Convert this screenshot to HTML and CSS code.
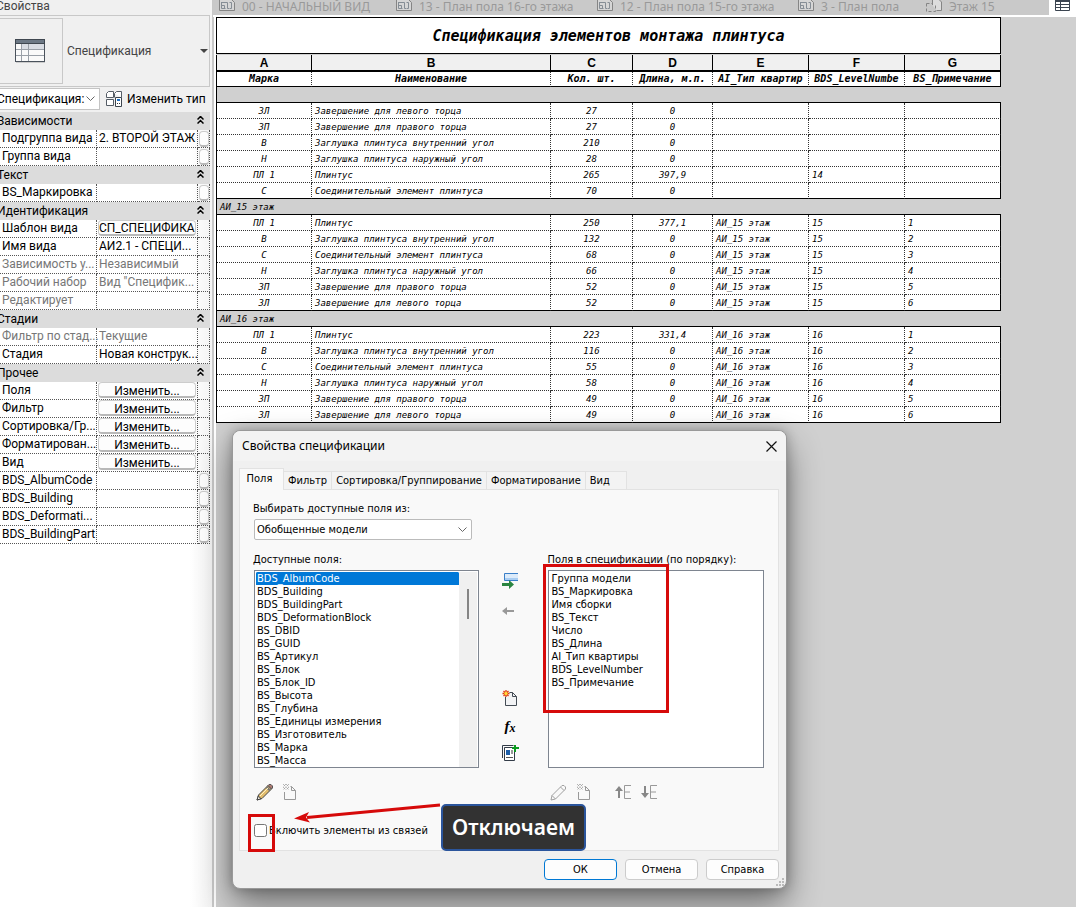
FILE: index.html
```html
<!DOCTYPE html>
<html lang="ru">
<head>
	<meta charset="utf-8">
	<title>Спецификация элементов монтажа плинтуса</title>
	<link rel="stylesheet" href="styles.css">
</head>
<body>
<svg class="defs" width="0" height="0">
	<symbol id="plan" viewBox="0 0 16 11">
		<path d="M.5-2V10.500h15V2.500l-3-3" fill="#d6d6d6" stroke="#858585"/>
		<path d="M3 2.500h5.500v6H10M2.500 5.500h3v3M2.500 2v6.500h4M10.500 2.500h2v6h-2" fill="none" stroke="#858d95"/>
	</symbol>
	<symbol id="up2" viewBox="0 0 7 8">
		<path d="M.5 3.500l3-3 3 3M.5 7.500l3-3 3 3" fill="none" stroke="#000" stroke-width="1.500"/>
	</symbol>
	<symbol id="chev" viewBox="0 0 9 6">
		<path d="M.5.5l4 4 4-4" fill="none" stroke="#666"/>
	</symbol>
	<symbol id="delpage" viewBox="0 0 16 17">
		<path d="M2.500 8v7.500h11V6.500l-4-4h-1M9.500 2.500v4h4" fill="none" stroke="#999"/>
		<path d="M1 0l6 6M4 0l3 3M1 3l3 3M7 0L1 6M4 0L1 3M7 3L4 6" stroke="#999" stroke-dasharray="1 1"/>
	</symbol>
</svg>

<div class="app">
	<aside class="props">
		<div class="props-title">Свойства</div>
		<div class="type-box">
			<div class="thumb">
				<svg width="32" height="26" viewBox="0 0 32 26">
					<rect x="2" y="3" width="29" height="22" fill="#ccc"/>
					<rect x="1.500" y="1.500" width="29" height="22" fill="#fafafa" stroke="#4a525c"/>
					<rect x="1.500" y="1.500" width="29" height="4" fill="#6c7885" stroke="#3f4750"/>
					<path d="M8 6h22v6H8z" fill="#d9dde4"/>
					<path d="M2 11.500h28M2 17.500h28M7.500 6v17M14.500 6v17" stroke="#9aa0a8"/>
				</svg>
			</div>
			<span class="type-name">Спецификация</span>
			<svg width="8" height="4" viewBox="0 0 8 4"><path d="M0 0h8L4 4z" fill="#444"/></svg>
		</div>
		<div class="type-row">
			<button class="combo" type="button"><span>Спецификация:</span><svg width="9" height="6"><use href="#chev"/></svg></button>
			<button class="edit-type" type="button">
				<svg width="16" height="16" viewBox="0 0 16 16">
					<path d="M.5 2.500l2-2h5v6h-7zM8.500 2.500l2-2h5v6M.5 8.500h7v6h-7zM8.500 2.500v4" fill="#fff" stroke="#555d66"/>
					<path d="M9.500 6.500h6v9h-6z" fill="#fff" stroke="#3b444d"/>
					<path d="M11 8h3v2h-3z" fill="#1f6fc0"/>
					<path d="M11 12h1v1h-1zM13 12h1v1h-1z" fill="#333"/>
				</svg>
				Изменить тип
			</button>
		</div>
		<table class="grid">
			<colgroup><col><col class="c-value"><col class="c-more"></colgroup>
			<tr class="head"><th colspan="2">Зависимости</th><th><svg width="7" height="8"><use href="#up2"/></svg></th></tr>
			<tr><td>Подгруппа вида</td><td>2. ВТОРОЙ ЭТАЖ</td><td><button class="more" aria-label="Подгруппа вида"></button></td></tr>
			<tr><td>Группа вида</td><td></td><td><button class="more" aria-label="Группа вида"></button></td></tr>
			<tr class="head"><th colspan="2">Текст</th><th><svg width="7" height="8"><use href="#up2"/></svg></th></tr>
			<tr><td>BS_Маркировка</td><td></td><td><button class="more" aria-label="BS_Маркировка"></button></td></tr>
			<tr class="head"><th colspan="2">Идентификация</th><th><svg width="7" height="8"><use href="#up2"/></svg></th></tr>
			<tr><td>Шаблон вида</td><td><button class="cell-btn tpl">СП_СПЕЦИФИКА</button></td><td></td></tr>
			<tr><td>Имя вида</td><td>АИ2.1 - СПЕЦИ...</td><td></td></tr>
			<tr class="off"><td>Зависимость у...</td><td>Независимый</td><td></td></tr>
			<tr class="off"><td>Рабочий набор</td><td>Вид "Специфик...</td><td></td></tr>
			<tr class="off"><td>Редактирует</td><td></td><td></td></tr>
			<tr class="head"><th colspan="2">Стадии</th><th><svg width="7" height="8"><use href="#up2"/></svg></th></tr>
			<tr class="off"><td>Фильтр по стад...</td><td>Текущие</td><td></td></tr>
			<tr><td>Стадия</td><td>Новая конструк...</td><td></td></tr>
			<tr class="head"><th colspan="2">Прочее</th><th><svg width="7" height="8"><use href="#up2"/></svg></th></tr>
			<tr><td>Поля</td><td><button class="cell-btn">Изменить...</button></td><td></td></tr>
			<tr><td>Фильтр</td><td><button class="cell-btn">Изменить...</button></td><td></td></tr>
			<tr><td>Сортировка/Гр...</td><td><button class="cell-btn">Изменить...</button></td><td></td></tr>
			<tr><td>Форматирован...</td><td><button class="cell-btn">Изменить...</button></td><td></td></tr>
			<tr><td>Вид</td><td><button class="cell-btn">Изменить...</button></td><td></td></tr>
			<tr><td>BDS_AlbumCode</td><td></td><td><button class="more" aria-label="BDS_AlbumCode"></button></td></tr>
			<tr><td>BDS_Building</td><td></td><td><button class="more" aria-label="BDS_Building"></button></td></tr>
			<tr><td>BDS_Deformati...</td><td></td><td><button class="more" aria-label="BDS_Deformation"></button></td></tr>
			<tr><td>BDS_BuildingPart</td><td></td><td><button class="more" aria-label="BDS_BuildingPart"></button></td></tr>
		</table>
	</aside>

	<main class="view">
		<nav class="docs">
			<a class="doc" href="#"><svg width="16" height="11"><use href="#plan"/></svg>00 - НАЧАЛЬНЫЙ ВИД</a>
			<a class="doc wide" href="#"><svg width="16" height="11"><use href="#plan"/></svg>13 - План пола 16-го этажа</a>
			<a class="doc wide" href="#"><svg width="16" height="11"><use href="#plan"/></svg>12 - План пола 15-го этажа</a>
			<a class="doc short" href="#"><svg width="16" height="11"><use href="#plan"/></svg>3 - План пола</a>
			<a class="doc last" href="#"><svg width="16" height="12" viewBox="0 0 16 12"><path d="M6.500 5V-1h6l3 3v8.500h-5" fill="#ddd" stroke="#858585"/><path d="M.5 3.500h6M.5 3.500v8h9v-6" fill="none" stroke="#858585" stroke-dasharray="3 2"/></svg>Этаж 15</a>
			<a class="doc active" href="#" aria-label="Спецификация"><svg width="15" height="12" viewBox="0 0 15 12"><path d="M.5 0v10.500h14V0M1 4.500h13M1 7.500h13M5.500 2v9M.5.5h14v1H.5z" fill="none" stroke="#3b4450"/></svg></a>
		</nav>
		<table class="sched">
			<caption>Спецификация элементов монтажа плинтуса</caption>
			<colgroup><col class="w-a"><col class="w-b"><col class="w-c"><col class="w-d"><col class="w-e"><col class="w-e"><col class="w-e"></colgroup>
			<tr class="letters"><th>A</th><th>B</th><th>C</th><th>D</th><th>E</th><th>F</th><th>G</th></tr>
			<tr class="names"><th>Марка</th><th>Наименование</th><th>Кол. шт.</th><th>Длина, м.п.</th><th>AI_Тип квартир</th><th>BDS_LevelNumbe</th><th>BS_Примечание</th></tr>
			<tr class="group"><td colspan="7"></td></tr>
			<tr><td>ЗЛ</td><td>Завершение для левого торца</td><td>27</td><td>0</td><td></td><td></td><td></td></tr>
			<tr><td>ЗП</td><td>Завершение для правого торца</td><td>27</td><td>0</td><td></td><td></td><td></td></tr>
			<tr><td>В</td><td>Заглушка плинтуса внутренний угол</td><td>210</td><td>0</td><td></td><td></td><td></td></tr>
			<tr><td>Н</td><td>Заглушка плинтуса наружный угол</td><td>28</td><td>0</td><td></td><td></td><td></td></tr>
			<tr><td>ПЛ 1</td><td>Плинтус</td><td>265</td><td>397,9</td><td></td><td>14</td><td></td></tr>
			<tr class="end"><td>С</td><td>Соединительный элемент плинтуса</td><td>70</td><td>0</td><td></td><td></td><td></td></tr>
			<tr class="group"><td colspan="7">АИ_15 этаж</td></tr>
			<tr><td>ПЛ 1</td><td>Плинтус</td><td>250</td><td>377,1</td><td>АИ_15 этаж</td><td>15</td><td>1</td></tr>
			<tr><td>В</td><td>Заглушка плинтуса внутренний угол</td><td>132</td><td>0</td><td>АИ_15 этаж</td><td>15</td><td>2</td></tr>
			<tr><td>С</td><td>Соединительный элемент плинтуса</td><td>68</td><td>0</td><td>АИ_15 этаж</td><td>15</td><td>3</td></tr>
			<tr><td>Н</td><td>Заглушка плинтуса наружный угол</td><td>66</td><td>0</td><td>АИ_15 этаж</td><td>15</td><td>4</td></tr>
			<tr><td>ЗП</td><td>Завершение для правого торца</td><td>52</td><td>0</td><td>АИ_15 этаж</td><td>15</td><td>5</td></tr>
			<tr class="end"><td>ЗЛ</td><td>Завершение для левого торца</td><td>52</td><td>0</td><td>АИ_15 этаж</td><td>15</td><td>6</td></tr>
			<tr class="group"><td colspan="7">АИ_16 этаж</td></tr>
			<tr><td>ПЛ 1</td><td>Плинтус</td><td>223</td><td>331,4</td><td>АИ_16 этаж</td><td>16</td><td>1</td></tr>
			<tr><td>В</td><td>Заглушка плинтуса внутренний угол</td><td>116</td><td>0</td><td>АИ_16 этаж</td><td>16</td><td>2</td></tr>
			<tr><td>С</td><td>Соединительный элемент плинтуса</td><td>55</td><td>0</td><td>АИ_16 этаж</td><td>16</td><td>3</td></tr>
			<tr><td>Н</td><td>Заглушка плинтуса наружный угол</td><td>58</td><td>0</td><td>АИ_16 этаж</td><td>16</td><td>4</td></tr>
			<tr><td>ЗП</td><td>Завершение для правого торца</td><td>49</td><td>0</td><td>АИ_16 этаж</td><td>16</td><td>5</td></tr>
			<tr class="end"><td>ЗЛ</td><td>Завершение для левого торца</td><td>49</td><td>0</td><td>АИ_16 этаж</td><td>16</td><td>6</td></tr>
		</table>
	</main>
</div>

<div class="dialog" role="dialog" aria-labelledby="dlg-title">
	<header class="dlg-head">
		<span id="dlg-title">Свойства спецификации</span>
		<button class="close" type="button" aria-label="Закрыть"><svg width="11" height="11" viewBox="0 0 11 11"><path d="M.5.5l10 10M10.500.5l-10 10" stroke="#111" stroke-width="1.200"/></svg></button>
	</header>
	<div class="tabs">
		<button class="tab on" type="button">Поля</button>
		<button class="tab" type="button">Фильтр</button>
		<button class="tab" type="button">Сортировка/Группирование</button>
		<button class="tab" type="button">Форматирование</button>
		<button class="tab" type="button">Вид</button>
	</div>
	<div class="page">
		<label for="src">Выбирать доступные поля из:</label>
		<div class="select-wrap">
			<select id="src"><option>Обобщенные модели</option></select>
			<svg width="9" height="6"><use href="#chev"/></svg>
		</div>
		<div class="lists">
			<div class="side avail">
				<label for="avail">Доступные поля:</label>
				<div class="listbox">
					<select id="avail" size="15">
						<option selected>BDS_AlbumCode</option>
						<option>BDS_Building</option>
						<option>BDS_BuildingPart</option>
						<option>BDS_DeformationBlock</option>
						<option>BS_DBID</option>
						<option>BS_GUID</option>
						<option>BS_Артикул</option>
						<option>BS_Блок</option>
						<option>BS_Блок_ID</option>
						<option>BS_Высота</option>
						<option>BS_Глубина</option>
						<option>BS_Единицы измерения</option>
						<option>BS_Изготовитель</option>
						<option>BS_Марка</option>
						<option>BS_Масса</option>
					</select>
					<div class="track"><div class="bar"></div></div>
				</div>
				<div class="tools">
					<button class="icon" aria-label="Изменить параметр"><svg width="17" height="17" viewBox="0 0 17 17"><path d="M1 16l1.500-5L12 1.500l3.500 3.500L6 14.500z" fill="#e2bd6e" stroke="#444"/><path d="M12 1.500l1-1h2l1.500 1.500v2l-1 1z" fill="#b07a72" stroke="#555"/><path d="M10.500 3l3.500 3.500" stroke="#777" stroke-width="2"/><path d="M4 12l8-8" stroke="#fff3c8"/><path d="M1 16l1.300-4 2.700 2.700z" fill="#f4efe4" stroke="#444"/></svg></button>
					<button class="icon" aria-label="Удалить параметр"><svg width="16" height="17"><use href="#delpage"/></svg></button>
				</div>
			</div>
			<div class="mid">
				<button class="icon" aria-label="Добавить"><svg width="16" height="17" viewBox="0 0 16 17"><path d="M2.500 1.500h16v7h-16z" fill="#dcebfa" stroke="#3a7fc8"/><path d="M3 6h13v2H3z" fill="#a9cdf2"/><path d="M0 11h7V8l5 4.500L7 17v-3H0z" fill="#2b8540"/></svg></button>
				<button class="icon gap-s" aria-label="Убрать"><svg width="12" height="8" viewBox="0 0 12 8"><path d="M0 4l5-4v3h7v2H5v3z" fill="#999"/></svg></button>
				<button class="icon gap-l" aria-label="Создать параметр"><svg width="16" height="17" viewBox="0 0 16 17"><path d="M3.500 7v8.500h11v-9l-4-4h-3" fill="#f2f3f5" stroke="#444c55"/><path d="M10.500 2.500v4h4" fill="none" stroke="#444c55"/><path d="M4 0v7M.5 3.500h7M1.500 1l5 5M6.500 1l-5 5" stroke="#e03a10" stroke-width="1.300"/><circle cx="4" cy="3.500" r="1.700" fill="#ffd93a"/></svg></button>
				<button class="icon fx gap-m" aria-label="Формула">f<sub>x</sub></button>
				<button class="icon gap-m" aria-label="Комбинировать параметры"><svg width="17" height="16" viewBox="0 0 17 16"><path d="M.5 13V.5h11" fill="none" stroke="#333c48"/><path d="M2.500 2.500h10v13h-10z" fill="#fff" stroke="#333c48"/><path d="M4 5h4v5H4z" fill="#1e5fa8"/><path d="M9 5h2v4H9z" fill="#999"/><path d="M4 12.500h7" stroke="#555"/><path d="M10 2h2V0h2v2h3v2h-3v3h-2V4h-2z" fill="#0c9a20"/></svg></button>
			</div>
			<div class="side used">
				<label for="used">Поля в спецификации (по порядку):</label>
				<div class="listbox">
					<select id="used" size="15">
						<option>Группа модели</option>
						<option>BS_Маркировка</option>
						<option>Имя сборки</option>
						<option>BS_Текст</option>
						<option>Число</option>
						<option>BS_Длина</option>
						<option>AI_Тип квартиры</option>
						<option>BDS_LevelNumber</option>
						<option>BS_Примечание</option>
					</select>
				</div>
				<div class="tools">
					<button class="icon" aria-label="Изменить поле"><svg width="17" height="17" viewBox="0 0 17 17"><path d="M1 16l1-4.500L12 1.500h2l1.500 1.500v2L5.500 15zM10.500 3L14 6.500M2 11.500L5.500 15" fill="none" stroke="#a0a0a0"/></svg></button>
					<button class="icon" aria-label="Удалить поле"><svg width="16" height="17"><use href="#delpage"/></svg></button>
					<button class="icon order" aria-label="Вверх"><svg width="17" height="15" viewBox="0 0 17 15"><path d="M4 1l4 5H5v7H3V6H0z" fill="#888"/><path d="M16 .5H9.500v13H16M9.500 7H15" fill="none" stroke="#999"/></svg></button>
					<button class="icon" aria-label="Вниз"><svg width="17" height="15" viewBox="0 0 17 15"><path d="M4 13L0 8h3V1h2v7h3z" fill="#888"/><path d="M16 .5H9.500v13H16M9.500 7H15" fill="none" stroke="#999"/></svg></button>
				</div>
			</div>
		</div>
		<label class="check"><input type="checkbox">Включить элементы из связей</label>
	</div>
	<footer class="dlg-foot">
		<button class="btn primary" type="button">ОК</button>
		<button class="btn" type="button">Отмена</button>
		<button class="btn" type="button">Справка</button>
	</footer>
	<svg class="grip" width="9" height="9" viewBox="0 0 9 9"><path d="M6 0h2v2H6zM3 3h2v2H3zM6 3h2v2H6zM0 6h2v2H0zM3 6h2v2H3zM6 6h2v2H6z" fill="#bbb"/></svg>

	<div class="mark mark-fields"></div>
	<div class="mark mark-check"></div>
	<svg class="arrow" width="150" height="24" viewBox="0 0 150 24"><path d="M147 4L14 16.500" stroke="#d60a0a" stroke-width="3"/><path d="M1 17.500L16 11l-3 5.500 4 5z" fill="#d60a0a"/></svg>
	<div class="note">Отключаем</div>
</div>
</body>
</html>
```

FILE: styles.css
```css
* {
	box-sizing: border-box;
}
body {
	margin: 0;
	overflow: hidden;
	font: 12px/16px "Noto Sans", "Open Sans", sans-serif;
	color: #000;
	background: #d0d0d0;
}
button, select, input {
	font: inherit;
	color: inherit;
	margin: 0;
}
button {
	padding: 0;
	border: none;
	background: none;
	white-space: nowrap;
}
table {
	border-spacing: 0;
	table-layout: fixed;
}
.defs {
	position: absolute;
}
.app {
	display: grid;
	grid-template-columns: 216px 1fr;
	min-height: 100vh;
}

/* properties palette */
.props {
	background: linear-gradient(to right, #fff 190px, #f4f4f4 210px);
	border-right: 2px solid #fff;
	box-shadow: inset -2px 0 #c8c8c8;
	padding-right: 4px;
	overflow: hidden;
	font-family: Roboto, "Noto Sans", sans-serif;
}
.props-title {
	height: 15px;
	line-height: 13px;
	text-indent: -4px;
	color: #444;
	background: #f0f0f0;
}
.type-box {
	display: flex;
	align-items: center;
	height: 72px;
	padding-right: 1px;
	border: 1px solid #c8c8c8;
	border-left: none;
	background: #f0f0f0;
}
.thumb {
	display: flex;
	align-items: center;
	width: 63px;
	height: 66px;
	padding-left: 14px;
	border: 1px solid #c8c8c8;
	border-left: none;
}
.type-name {
	flex: 1;
	padding-left: 4px;
	color: #444;
}
.type-row {
	display: flex;
	align-items: center;
	gap: 6px;
	height: 25px;
	padding-bottom: 2px;
	background: #f0f0f0;
}
.combo {
	display: flex;
	align-items: center;
	justify-content: space-between;
	width: 100px;
	height: 22px;
	padding-right: 4px;
	border: 1px solid #c4c4c4;
	border-left: none;
	background: #fff;
}
.combo span {
	width: 84px;
	text-align: left;
	text-indent: -3px;
}
.edit-type {
	display: flex;
	align-items: center;
	gap: 5px;
}
.grid {
	width: 210px;
}
.c-value {
	width: 101px;
}
.c-more {
	width: 12px;
}
.grid td, .grid th {
	height: 18px;
	padding: 0 0 1px 2px;
	line-height: 16px;
	font-weight: normal;
	text-align: left;
	white-space: nowrap;
}
.grid td {
	border-bottom: 1px dotted #555;
	border-right: 1px dotted #555;
}
.grid td:last-child {
	padding: 0;
}
.grid .head th {
	padding-bottom: 0;
	background: #dcdcdc;
	text-indent: -5px;
}
.grid .head th:last-child {
	padding: 0 0 2px;
	text-indent: 0;
}
.grid .head svg {
	display: block;
	margin-left: -1px;
}
.off {
	color: #777;
}
.more, .cell-btn {
	display: block;
	height: 16px;
	border: 1px solid #ccc;
	border-bottom: 2px solid #b8b8b8;
	border-radius: 4px;
	background: #fdfdfd;
}
.more {
	width: 10px;
	margin-left: 1px;
}
.cell-btn {
	width: 98px;
	margin-left: -1px;
	padding-top: 1px;
	line-height: 14px;
}
.tpl {
	padding-top: 0;
	text-align: left;
}

/* view tabs */
.view {
	min-width: 0;
}
.docs {
	display: flex;
	height: 17px;
	margin-left: -3px;
	border-bottom: 2px solid #fff;
	background: #c9c9c9;
	overflow: hidden;
}
.doc {
	display: flex;
	gap: 7px;
	flex: none;
	width: 177px;
	padding-left: 6px;
	line-height: 13px;
	color: #999;
	text-decoration: none;
	white-space: nowrap;
}
.doc.wide {
	width: 201px;
}
.doc.short {
	width: 128px;
}
.doc.last {
	width: 129px;
}
.doc.active {
	flex: 1;
	background: #fff;
}

/* schedule */
.sched {
	width: 785px;
	border-left: 1px solid #000;
	font: italic 9px/12px "DejaVu Sans Mono", "Liberation Mono", monospace;
}
.sched caption {
	height: 37px;
	margin-bottom: 1px;
	border: 1px solid #000;
	background: #fff;
	font-size: 15px;
	font-weight: bold;
	line-height: 36px;
}
.w-a { width: 95px; }
.w-b { width: 239px; }
.w-c { width: 82px; }
.w-d { width: 80px; }
.w-e { width: 96px; }
.sched td, .sched th {
	height: 16px;
	padding: 0 3px;
	border-right: 1px dotted #333;
	border-bottom: 1px dotted #333;
	background: #fff;
	white-space: nowrap;
}
.sched td:nth-child(1), .sched td:nth-child(3), .sched td:nth-child(4) {
	text-align: center;
}
.sched .letters th {
	height: 17px;
	border-right: 1px solid #000;
	border-bottom: 2px solid #000;
	background: #f0f0f0;
	font: bold 12px/14px "Liberation Sans", sans-serif;
}
.sched .names th {
	height: 15px;
	border-bottom: 1px solid #000;
	font-size: 10px;
}
.sched td:last-child, .sched .names th:last-child {
	border-right: 1px solid #000;
}
.sched .end td {
	border-bottom: 1px solid #000;
}
.sched .group td {
	text-align: left;
	border-right: none;
	border-bottom: 1px solid #000;
	background: #d0d0d0;
}

/* dialog window */
.dialog {
	position: absolute;
	left: 232px;
	top: 430px;
	width: 555px;
	padding: 0 7px 8px 6px;
	border: 1px solid #999;
	border-radius: 8px;
	background: #f0f0f0;
	box-shadow: 0 16px 34px rgba(0, 0, 0, .45), 0 0 12px rgba(0, 0, 0, .25);
	font: 11px/13px "DejaVu Sans Condensed", "DejaVu Sans", sans-serif;
}
.dlg-head {
	display: flex;
	align-items: center;
	justify-content: space-between;
	height: 30px;
	margin: 0 -7px 0 -6px;
	padding: 0 9px;
	border-radius: 8px 8px 0 0;
	background: #f3f3f3;
	font: 12px/16px "Noto Sans", sans-serif;
}
.close svg {
	display: block;
}
.tabs {
	display: flex;
	align-items: flex-end;
	height: 28px;
}
.tab {
	height: 18px;
	padding: 0 4px;
	border: 1px solid #e2e2e2;
	border-left: none;
	border-bottom: none;
	background: #f3f3f3;
}
.tab:last-child {
	padding-right: 16px;
}
.tab.on {
	height: 22px;
	margin-bottom: -1px;
	width: 45px;
	padding: 0 8px 3px 4px;
	border-left: 1px solid #e2e2e2;
	background: #f9f9f9;
}
.page {
	padding: 12px 14px;
	border: 1px solid #e2e2e2;
	background: #f9f9f9;
}
.page label {
	display: block;
	margin-left: -1px;
}
.select-wrap {
	display: flex;
	align-items: center;
	width: 218px;
	height: 21px;
	margin: 4px 0 13px;
	padding-right: 4px;
	border: 1px solid #bbb;
	border-radius: 2px;
	background: #fff;
}
.select-wrap select {
	flex: 1;
	appearance: none;
	padding: 0 2px;
	border: none;
	background: none;
}
.lists {
	display: flex;
}
.avail {
	width: 225px;
}
.used {
	width: 216px;
}
.listbox {
	display: flex;
	height: 198px;
	margin-top: 4px;
	padding: 1px 1px 0;
	border: 1px solid #7e8590;
	background: #fff;
}
.listbox select {
	flex: 1;
	height: 195px;
	padding: 0;
	border: none;
	outline: none;
	background: #fff;
	overflow: hidden;
}
.listbox option {
	height: 13px;
	min-height: 13px;
	padding: 0 1px;
	line-height: 13px;
}
.listbox option:checked {
	color: #fff;
	background: #0078d7 linear-gradient(#0078d7, #0078d7);
}
.track {
	width: 18px;
	padding: 17px 0 0 8px;
	background: #f0f0f0;
}
.bar {
	width: 2px;
	height: 30px;
	background: #858585;
}
.tools {
	display: flex;
	align-items: center;
	gap: 9px;
	height: 17px;
	margin-top: 16px;
	padding-left: 2px;
}
.icon {
	flex: none;
}
.icon svg {
	display: block;
}
.order {
	margin-left: 14px;
}
.mid {
	display: flex;
	flex-direction: column;
	align-items: flex-start;
	width: 70px;
	padding: 19px 0 0 23px;
}
.gap-s {
	margin-top: 18px;
}
.gap-m {
	margin-top: 10px;
}
.gap-l {
	margin-top: 75px;
}
.fx {
	height: 18px;
	padding-left: 3px;
	font: italic bold 15px/15px "Liberation Serif", serif;
}
.fx sub {
	font-size: 12px;
	line-height: 0;
	vertical-align: -1px;
}
.page .check {
	display: flex;
	align-items: center;
	gap: 2px;
	margin: 23px 0 1px;
}
.check input {
	width: 13px;
	height: 13px;
}
.dlg-foot {
	display: flex;
	justify-content: flex-end;
	gap: 8px;
	padding-top: 8px;
}
.btn {
	width: 73px;
	height: 21px;
	border: 1px solid #ccc;
	border-radius: 4px;
	background: #fdfdfd;
}
.btn.primary {
	border-color: #0078d4;
}
.grip {
	position: absolute;
	right: 1px;
	bottom: 1px;
}

/* callouts over the dialog */
.mark {
	position: absolute;
	border: 3px solid #d60a0a;
}
.mark-fields {
	left: 310px;
	top: 133px;
	width: 126px;
	height: 149px;
}
.mark-check {
	left: 15px;
	top: 383px;
	width: 27px;
	height: 38px;
}
.arrow {
	position: absolute;
	left: 60px;
	top: 370px;
}
.note {
	position: absolute;
	left: 208px;
	top: 373px;
	padding: 0 9px;
	border: 2px solid #2b559c;
	border-radius: 5px;
	background: #323232;
	color: #fff;
	font: 600 21px/43px "Noto Sans", sans-serif;
}
```
